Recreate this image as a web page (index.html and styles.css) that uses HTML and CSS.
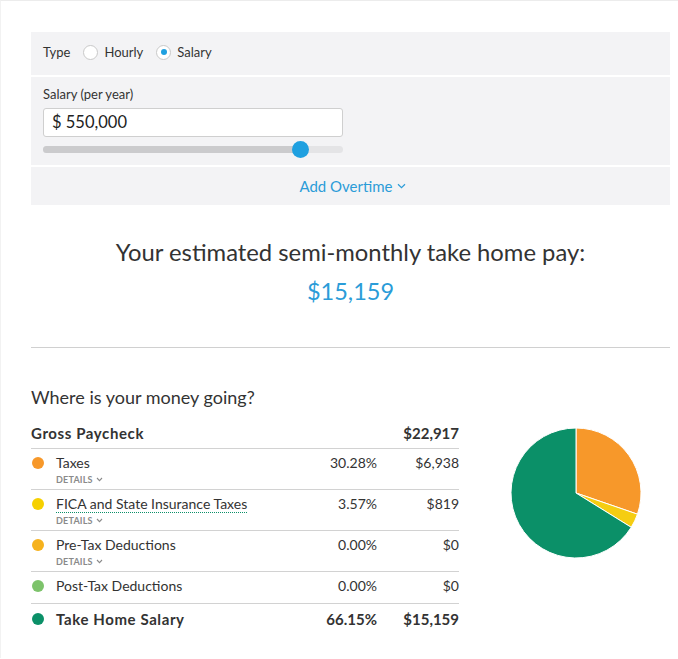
FILE: index.html
```html
<!DOCTYPE html>
<html>
<head>
<meta charset="utf-8">
<link rel="stylesheet" href="styles.css">
</head>
<body>
<div class="page">
  <div class="panel">
    <div class="panel-row type-row">
      <span class="type-label">Type</span>
      <label class="radio"><span class="radio-circle"></span>Hourly</label>
      <label class="radio"><span class="radio-circle checked"></span>Salary</label>
    </div>
    <div class="panel-row salary-row">
      <div class="field-label">Salary (per year)</div>
      <div class="input">$ 550,000</div>
      <div class="slider">
        <div class="slider-fill"></div>
        <div class="slider-thumb"></div>
      </div>
    </div>
    <div class="panel-row overtime-row">
      <span class="overtime">Add Overtime <svg class="chev" width="9" height="6" viewBox="0 0 9 6"><path d="M1 1.2 L4.5 4.6 L8 1.2" fill="none" stroke="#2b9cd8" stroke-width="1.2"/></svg></span>
    </div>
  </div>

  <div class="result">
    <div class="result-title">Your estimated semi-monthly take home pay:</div>
    <div class="result-value">$15,159</div>
  </div>

  <hr class="divider">

  <div class="breakdown">
    <div class="table-wrap">
      <div class="section-title">Where is your money going?</div>
      <div class="table">
        <div class="row head">
          <span class="name">Gross Paycheck</span>
          <span class="pct"></span>
          <span class="amt">$22,917</span>
        </div>
        <div class="row">
          <span class="dot orange"></span>
          <span class="name">Taxes</span>
          <span class="pct">30.28%</span>
          <span class="amt">$6,938</span>
          <span class="details">DETAILS <svg width="7" height="5" viewBox="0 0 7 5"><path d="M1 1 L3.5 3.6 L6 1" fill="none" stroke="#8a8a8a" stroke-width="1.1"/></svg></span>
        </div>
        <div class="row">
          <span class="dot yellow"></span>
          <span class="name"><span class="dotted">FICA and State Insurance Taxes</span></span>
          <span class="pct">3.57%</span>
          <span class="amt">$819</span>
          <span class="details">DETAILS <svg width="7" height="5" viewBox="0 0 7 5"><path d="M1 1 L3.5 3.6 L6 1" fill="none" stroke="#8a8a8a" stroke-width="1.1"/></svg></span>
        </div>
        <div class="row">
          <span class="dot amber"></span>
          <span class="name">Pre-Tax Deductions</span>
          <span class="pct">0.00%</span>
          <span class="amt">$0</span>
          <span class="details">DETAILS <svg width="7" height="5" viewBox="0 0 7 5"><path d="M1 1 L3.5 3.6 L6 1" fill="none" stroke="#8a8a8a" stroke-width="1.1"/></svg></span>
        </div>
        <div class="row plain">
          <span class="dot lightgreen"></span>
          <span class="name">Post-Tax Deductions</span>
          <span class="pct">0.00%</span>
          <span class="amt">$0</span>
        </div>
        <div class="row total">
          <span class="dot green"></span>
          <span class="name">Take Home Salary</span>
          <span class="pct">66.15%</span>
          <span class="amt">$15,159</span>
        </div>
      </div>
    </div>
    <div class="chart">
      <svg width="132" height="132" viewBox="-1 -1 132 132">
        <path d="M65 65 L65 0 A65 65 0 0 1 126.46 86.16 Z" fill="#f7982a" stroke="#fff" stroke-width="1"/>
        <path d="M65 65 L126.46 86.16 A65 65 0 0 1 120.21 99.30 Z" fill="#f5cd12" stroke="#fff" stroke-width="1"/>
        <path d="M65 65 L120.21 99.30 A65 65 0 1 1 65 0 Z" fill="#0b9068" stroke="#fff" stroke-width="1"/>
      </svg>
    </div>
  </div>
</div>
</body>
</html>
```

FILE: styles.css
```css
html, body {
  margin: 0;
  padding: 0;
  background: #fff;
}
body {
  font-family: Lato, "Open Sans", sans-serif;
  color: #333;
}
.page {
  border-top: 1px solid #ececec;
  border-left: 1px solid #f2f2f2;
  height: 658px;
  box-sizing: border-box;
  padding: 31px 8px 0 30px;
}
.panel {
  display: flex;
  flex-direction: column;
  gap: 2px;
  width: 639px;
}
.panel-row {
  background: #f3f3f5;
  padding: 0 12px;
  box-sizing: border-box;
}
.type-row {
  height: 43px;
  display: flex;
  align-items: center;
  font-size: 13px;
  color: #333;
  padding-bottom: 3px;
}
.type-label {
  margin-right: 13px;
}
.radio {
  display: flex;
  align-items: center;
  margin-right: 13px;
}
.radio-circle {
  width: 13px;
  height: 13px;
  border: 1px solid #c9c9c9;
  border-radius: 50%;
  background: #fff;
  margin-right: 6px;
  position: relative;
}
.radio-circle.checked::after {
  content: "";
  position: absolute;
  left: 3.5px;
  top: 3.5px;
  width: 6px;
  height: 6px;
  border-radius: 50%;
  background: #1fa0e0;
}
.salary-row {
  height: 88px;
  padding-top: 9px;
}
.field-label {
  font-size: 13px;
  line-height: 16px;
  color: #333;
}
.input {
  margin-top: 6px;
  width: 300px;
  height: 29px;
  box-sizing: border-box;
  background: #fff;
  border: 1px solid #cfcfcf;
  border-radius: 3px;
  font-size: 16.5px;
  line-height: 27px;
  padding-left: 8px;
  color: #222;
}
.slider {
  margin-top: 9px;
  width: 300px;
  height: 7px;
  border-radius: 4px;
  background: #e4e4e6;
  position: relative;
}
.slider-fill {
  width: 258px;
  height: 7px;
  border-radius: 4px 0 0 4px;
  background: #cbcbcd;
}
.slider-thumb {
  position: absolute;
  left: 249px;
  top: -5px;
  width: 17px;
  height: 17px;
  border-radius: 50%;
  background: #1fa0e0;
}
.overtime-row {
  height: 38px;
  display: flex;
  align-items: center;
  justify-content: center;
  padding-left: 16px;
}
.overtime {
  color: #2b9cd8;
  font-size: 15px;
  display: flex;
  align-items: center;
  gap: 4px;
}
.result {
  width: 639px;
  text-align: center;
  padding-top: 33px;
}
.result-title {
  font-size: 23.8px;
  line-height: 28px;
  color: #333;
}
.result-value {
  margin-top: 10px;
  font-size: 23.5px;
  line-height: 30px;
  color: #2b9cd8;
}
.divider {
  width: 639px;
  margin: 41px 0 0 0;
  border: 0;
  border-top: 1px solid #d0d0d0;
}
.breakdown {
  display: flex;
  width: 639px;
  padding-top: 38px;
}
.table-wrap {
  width: 428px;
}
.section-title {
  font-size: 18px;
  line-height: 22px;
}
.table {
  margin-top: 15px;
}
.row {
  display: grid;
  grid-template-columns: 25px 1fr 80px 82px;
  align-items: center;
  border-bottom: 1px solid #d2d2d2;
  padding: 6px 0 3px;
  font-size: 14px;
  line-height: 16px;
}
.row .name { grid-column: 2; }
.row .pct { grid-column: 3; text-align: right; }
.row .amt { grid-column: 4; text-align: right; }
.row.head {
  padding: 0 0 5px;
  font-weight: 700;
  font-size: 15px;
  line-height: 20px;
}
.row.head .name { grid-column: 1 / 3; letter-spacing: 0.6px; }
.row.plain {
  padding: 6px 0 9px;
}
.row.total {
  border-bottom: 0;
  padding-top: 6px;
  font-weight: 700;
  font-size: 15px;
  line-height: 18px;
}
.row.total .name { letter-spacing: 0.6px; }
.dot {
  grid-column: 1;
  width: 12px;
  height: 12px;
  border-radius: 50%;
  margin-left: 1px;
}
.orange { background: #f7982a; }
.yellow { background: #f6d000; }
.amber { background: #f6b21d; }
.lightgreen { background: #7dc36b; }
.green { background: #0b9068; }
.dotted {
  border-bottom: 1px dotted #0b9068;
}
.details {
  grid-column: 2;
  font-size: 9px;
  font-weight: 700;
  color: #8a8a8a;
  line-height: 13px;
  margin-top: 2px;
  letter-spacing: 0.2px;
  display: flex;
  align-items: center;
  gap: 3px;
}
.chart {
  margin-left: 51px;
  padding-top: 41px;
}
```
